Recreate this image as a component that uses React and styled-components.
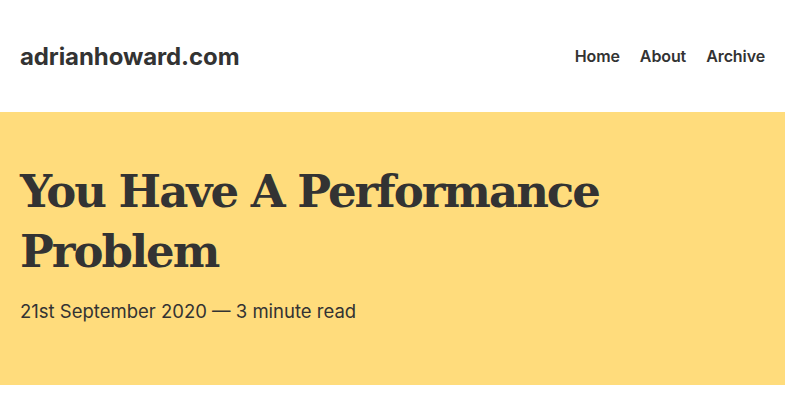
import React from "react"
import styled, { createGlobalStyle } from "styled-components"

const GlobalStyle = createGlobalStyle`
  html, body {
    margin: 0;
    padding: 0;
    background: #ffffff;
  }
  body {
    font-family: Inter, "Noto Sans", sans-serif;
    color: #333333;
  }
`

const Page = styled.div`
  width: 785px;
`

const Header = styled.header`
  height: 112px;
  display: flex;
  align-items: center;
  justify-content: space-between;
  padding: 0 20px;
  box-sizing: border-box;
`

const SiteName = styled.a`
  font-size: 24px;
  font-weight: 700;
  color: #333333;
  text-decoration: none;
  letter-spacing: -0.1px;
`

const Nav = styled.nav`
  display: flex;
  gap: 20px;
`

const NavLink = styled.a`
  font-size: 16px;
  font-weight: 600;
  color: #333333;
  text-decoration: none;
  letter-spacing: -0.1px;
`

const Hero = styled.section`
  background: #ffdc7c;
  padding: 50px 20px 50px;
  height: 273px;
  box-sizing: border-box;
`

const Title = styled.h1`
  margin: 0;
  font-family: "DejaVu Serif", "Liberation Serif", serif;
  font-weight: 700;
  font-size: 45px;
  line-height: 60px;
  letter-spacing: -2px;
  color: #333333;
  max-width: 640px;
`

const Meta = styled.p`
  margin: 16px 0 0;
  font-size: 18.5px;
  line-height: 26px;
  color: #333333;
`

const App = () => {
  return (
    <Page>
      <GlobalStyle />
      <Header>
        <SiteName href="#">adrianhoward.com</SiteName>
        <Nav>
          <NavLink href="#">Home</NavLink>
          <NavLink href="#">About</NavLink>
          <NavLink href="#">Archive</NavLink>
        </Nav>
      </Header>
      <Hero>
        <Title>You Have A Performance Problem</Title>
        <Meta>21st September 2020 — 3 minute read</Meta>
      </Hero>
    </Page>
  )
}

export default App
